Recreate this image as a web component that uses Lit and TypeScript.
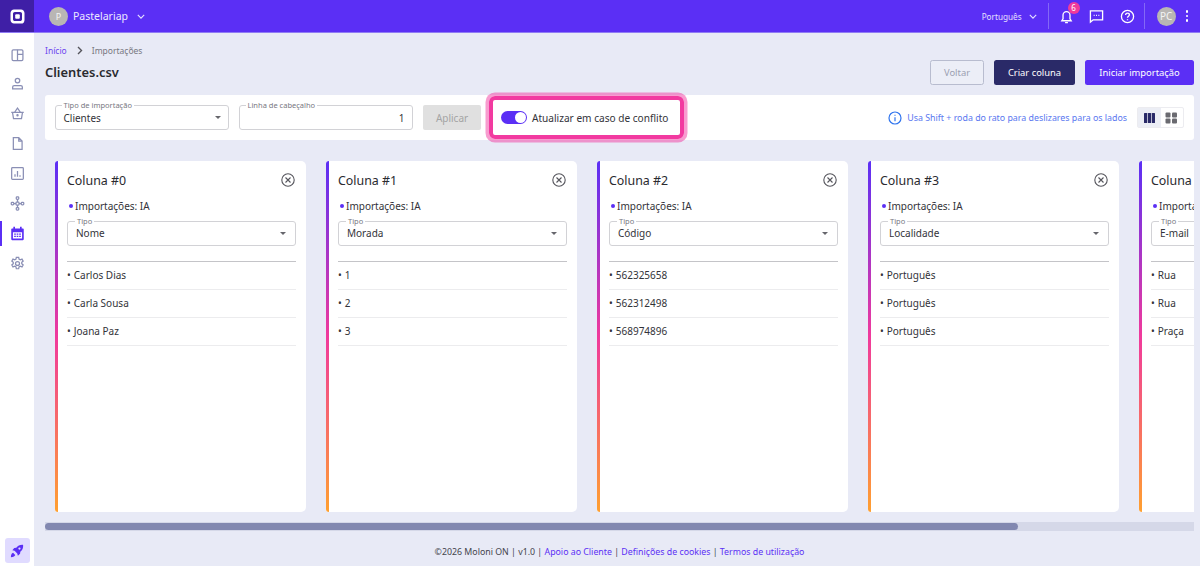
import { LitElement, html, css, svg } from "lit";
import { customElement } from "lit/decorators.js";

const navIcons = [
  svg`<g transform="translate(0 2)"><rect x="2.500" y="2.500" width="13" height="13" rx="1.500"/><path d="M9 2.500v13M9 8h6.500"/></g>`,
  svg`<circle cx="9" cy="5.400" r="2.700"/><path d="M3.200 15.500v-2.300c0-1 .8-1.800 1.800-1.800h8c1 0 1.800.8 1.800 1.800v2.300z"/>`,
  svg`<path d="M1.500 7.500h15M3 7.500l1.200 7.500h9.600L15 7.500M5.500 7.500 9 2.500l3.500 5"/><circle cx="9" cy="11" r=".7"/>`,
  svg`<path d="M4 2h6.500L14.500 6v10H4zM10.500 2v4h4"/>`,
  svg`<rect x="2" y="2" width="14" height="14" rx="1"/><path d="M6 13V10M9 13V6M12 13V11"/>`,
  svg`<rect x="7.500" y="1" width="3" height="3" rx="1"/><rect x="7.200" y="7.200" width="3.600" height="3.600" rx="1"/><rect x="7.500" y="14" width="3" height="3" rx="1"/><rect x="1.500" y="7.500" width="3" height="3" rx="1"/><rect x="13.500" y="7.500" width="3" height="3" rx="1"/><path d="M9 4v3.200M9 10.800V14M4.500 9h2.700M10.800 9h2.700"/>`,
];
const calendar = svg`<path fill="currentColor" stroke="none" d="M4 1h2v2h6V1h2v2h1.500c.6 0 1 .4 1 1v12c0 .6-.4 1-1 1h-13c-.6 0-1-.4-1-1V4c0-.6.4-1 1-1H4zM3.500 7.500V15h11V7.500z"/><path fill="currentColor" stroke="none" d="M5 9h2v1.500H5zM8 9h2v1.500H8zM11 9h2v1.500h-2zM5 11.800h2v1.500H5zM8 11.800h2v1.500H8zM11 11.800h2v1.500h-2z"/>`;
const gear = svg`<circle cx="9" cy="9" r="2.400"/><path d="M7.600 1.500h2.800l.4 2.200 1.500.8 2.100-.8 1.400 2.400-1.700 1.500v1.600l1.700 1.500-1.400 2.400-2.100-.8-1.500.8-.4 2.200H7.600l-.4-2.200-1.500-.8-2.100.8-1.400-2.400 1.700-1.500V7.600L2.200 6.100l1.400-2.400 2.100.8 1.500-.8z"/>`;
const chevron = html`<svg class="chev" viewBox="0 0 10 6"><path d="M1 1l4 4 4-4"/></svg>`;
const caret = html`<span class="caret"></span>`;

const columns = [
  { n: 0, type: "Nome", rows: ["Carlos Dias", "Carla Sousa", "Joana Paz"] },
  { n: 1, type: "Morada", rows: ["1", "2", "3"] },
  { n: 2, type: "Código", rows: ["562325658", "562312498", "568974896"] },
  { n: 3, type: "Localidade", rows: ["Português", "Português", "Português"] },
  { n: 4, type: "E-mail", rows: ["Rua", "Rua", "Praça"] },
];

@customElement("app-root")
export class AppRoot extends LitElement {
  static styles = css`
    :host {
      display: grid;
      grid-template-columns: 34px 1fr;
      grid-template-rows: 33px 1fr;
      width: 1200px;
      height: 566px;
      overflow: hidden;
      font-family: "Noto Sans", sans-serif;
      color: #28282f;
      background: #e8eaf6;
    }
    .logo {
      background: #3f1fa6;
      display: flex;
      align-items: center;
      justify-content: center;
      border-bottom: 1px solid #8f7bf5;
    }
    .topbar {
      background: #5b2ff5;
      border-bottom: 1px solid #8f7bf5;
      display: flex;
      align-items: center;
      color: #fff;
      padding: 0 9px 0 15px;
    }
    .avatar {
      border-radius: 50%;
      background: #b9b6b4;
      color: #f3f3f3;
      display: flex;
      align-items: center;
      justify-content: center;
      flex: none;
    }
    .a1 { width: 19px; height: 19px; font-size: 9px; }
    .a2 { width: 19px; height: 19px; font-size: 10px; margin-left: 12px; }
    .company { font-size: 10.500px; margin-left: 5px; color: #ece8ff; }
    .chev { width: 8px; height: 5px; fill: none; stroke: #e6e0ff; stroke-width: 1.400; flex: none; }
    .company + .chev { margin-left: 9px; }
    .spacer { flex: 1; }
    .lang { font-size: 8.200px; margin-right: 7px; color: #e6e0ff; }
    .vsep { width: 1px; height: 26px; background: #8468f6; flex: none; }
    .vs1 { margin-left: 11px; }
    .ticon { width: 15px; height: 15px; fill: none; stroke: #fff; stroke-width: 1.400; display: block; flex: none; }
    .bell { position: relative; margin-left: 10px; }
    .badge {
      position: absolute;
      top: -7px;
      left: 9px;
      width: 12px;
      height: 12px;
      border-radius: 50%;
      background: #f03a9c;
      font-size: 8px;
      line-height: 12px;
      text-align: center;
      color: #fff;
    }
    .chat { margin-left: 15px; }
    .help { margin-left: 16px; margin-right: 9px; }
    .kebab { display: flex; flex-direction: column; gap: 2px; margin-left: 10px; margin-right: 3px; }
    .kebab i { width: 2.400px; height: 2.400px; background: #fff; border-radius: 50%; display: block; }

    .side {
      background: #fff;
      display: flex;
      flex-direction: column;
      align-items: center;
      padding-top: 8px;
    }
    .nav {
      width: 100%;
      height: 25px;
      margin-bottom: 5px;
      display: flex;
      align-items: center;
      justify-content: center;
      color: #8a8fb5;
      flex: none;
    }
    .nav svg { width: 15px; height: 15px; fill: none; stroke: currentColor; stroke-width: 1.500; overflow: visible; }
    .nav.on { color: #5b2ff5; box-shadow: inset 2px 0 0 #5b2ff5; }
    .rocket {
      margin-top: auto;
      margin-bottom: 3px;
      margin-left: 0.500px;
      width: 25px;
      height: 25px;
      border-radius: 3px;
      background: #e0dbff;
      display: flex;
      align-items: center;
      justify-content: center;
    }
    .rocket svg { width: 14px; height: 14px; fill: #5b2ff5; }

    .main {
      min-width: 0;
      display: flex;
      flex-direction: column;
      padding: 0 6px 0 11px;
    }
    .crumbs {
      height: 13px;
      margin-top: 11px;
      display: flex;
      align-items: center;
      font-size: 8.500px;
      color: #77777f;
    }
    .crumbs a { color: #6d46f0; }
    .crumbs svg { width: 6px; height: 9px; margin: 0 9px 0 10px; fill: none; stroke: #55555c; stroke-width: 1.400; }
    .head {
      display: flex;
      align-items: center;
      height: 25px;
      margin-top: 3px;
      gap: 10px;
    }
    .head h1 {
      margin: 0 auto 0 0;
      position: relative;
      top: -1px;
      font-size: 12.900px;
      font-weight: 600;
      color: #2a2a30;
    }
    .btn {
      height: 25px;
      box-sizing: border-box;
      border-radius: 2.500px;
      font-size: 9.400px;
      display: flex;
      align-items: center;
      justify-content: center;
      color: #fff;
    }
    .b1 { width: 54px; border: 1px solid #b8bccf; color: #9b9fb2; background: #eceef7; }
    .b2 { width: 81px; background: #2a2a68; }
    .b3 { width: 109px; background: #5b2ff5; }
    .toolbar {
      margin-top: 10px;
      height: 45px;
      background: #fff;
      border-radius: 3px;
      display: flex;
      align-items: center;
      padding: 0 10px;
      flex: none;
    }
    .field {
      position: relative;
      height: 25px;
      box-sizing: border-box;
      border: 1px solid #d2d2d6;
      border-radius: 3px;
      display: flex;
      align-items: center;
      font-size: 10px;
      padding: 0 7.500px;
      color: #333339;
      background: #fff;
    }
    .field label {
      position: absolute;
      top: -5px;
      left: 5.500px;
      padding: 0 2px;
      background: #fff;
      font-size: 7.500px;
      line-height: 9px;
      color: #77777f;
    }
    .f1 { width: 174px; }
    .f2 { width: 174px; margin-left: 10px; justify-content: flex-end; }
    .caret {
      margin-left: auto;
      border: 3.200px solid transparent;
      border-top: 3.500px solid #66666c;
      border-bottom: 0;
    }
    .apply {
      width: 58px;
      height: 25px;
      margin-left: 10px;
      background: #e0e0e0;
      color: #a4a4a4;
      border-radius: 2px;
      font-size: 10px;
      display: flex;
      align-items: center;
      justify-content: center;
    }
    .conflict {
      margin-left: 8px;
      width: 195px;
      height: 43px;
      box-sizing: border-box;
      border: 4px solid #f23aa0;
      border-radius: 6px;
      box-shadow: 0 0 0 3.500px rgba(242, 58, 160, 0.5);
      display: flex;
      align-items: center;
      padding-left: 8px;
      font-size: 10.100px;
      color: #333339;
      flex: none;
    }
    .switch {
      width: 26px;
      height: 13px;
      border-radius: 7px;
      background: #5b2ff5;
      position: relative;
      margin-right: 5px;
      flex: none;
    }
    .switch::after {
      content: "";
      position: absolute;
      right: 1px;
      top: 1px;
      width: 11px;
      height: 11px;
      border-radius: 50%;
      background: #fff;
    }
    .info { margin-left: auto; display: flex; align-items: center; color: #5a78f0; font-size: 8.830px; }
    .info svg { width: 14px; height: 14px; fill: none; stroke: #2f74ee; stroke-width: 1.200; margin-right: 5px; }
    .views {
      margin-left: 10px;
      width: 47px;
      height: 21px;
      border: 1px solid #ececf0;
      box-sizing: border-box;
      border-radius: 2px;
      display: flex;
    }
    .views div { flex: 1; display: flex; align-items: center; justify-content: center; }
    .views div:first-child { background: #eceef5; }
    .views svg { width: 13px; height: 12px; }

    .board {
      margin-top: 21px;
      height: 351px;
      padding-left: 10px;
      display: flex;
      gap: 20px;
      overflow: hidden;
      flex: none;
    }
    .card {
      width: 251px;
      flex: none;
      box-sizing: border-box;
      background: #fff;
      border-radius: 3px 5px 5px 3px;
      position: relative;
      padding: 0 10.500px 0 12px;
      display: flex;
      flex-direction: column;
    }
    .card::before {
      content: "";
      position: absolute;
      left: 0;
      top: 0;
      bottom: 0;
      width: 3px;
      border-radius: 3px 0 0 3px;
      background: linear-gradient(#5b2ff5 0%, #f03a9c 50%, #ffa030 100%);
    }
    .ctitle {
      height: 20px;
      margin-top: 9px;
      display: flex;
      align-items: center;
      justify-content: space-between;
      font-size: 12.400px;
      color: #2a2a30;
    }
    .ctitle svg { width: 14px; height: 14px; margin-right: 0.500px; fill: none; stroke: #55555c; stroke-width: 1.100; flex: none; }
    .ia {
      margin-top: 9px;
      height: 14px;
      display: flex;
      align-items: center;
      font-size: 10px;
      color: #333339;
      padding-left: 2px;
    }
    .ia::before {
      content: "";
      width: 4px;
      height: 4px;
      border-radius: 50%;
      background: #5b2ff5;
      margin-right: 2px;
    }
    .card .field { margin-top: 8px; height: 25px; flex: none; padding: 0 9px 2px 8px; }
    .card .field .caret { margin-top: 2px; }
    .card .field label { left: 7px; }
    .list { margin-top: 15px; border-top: 1px solid #c4c4c8; }
    .row {
      height: 28px;
      box-sizing: border-box;
      border-bottom: 1px solid #ececee;
      display: flex;
      align-items: center;
      gap: 3px;
      padding-bottom: 2px;
      font-size: 10px;
      color: #333339;
    }

    .track {
      margin-top: 10px;
      height: 9px;
      background: #d5d8e8;
      flex: none;
    }
    .thumb { width: 973px; height: 7px; position: relative; top: 1px; background: #8288b0; border-radius: 4px; }
    .footer {
      margin-top: 15px;
      text-align: center;
      font-size: 8.800px;
      line-height: 12px;
      color: #44444c;
    }
    .footer a { color: #5b2ff5; }
  `;

  render() {
    return html`
      <div class="logo">
        <svg width="15" height="15" viewBox="0 0 15 15">
          <path fill="#fff" fill-rule="evenodd" d="M4 .5h7c1.900 0 3.500 1.600 3.500 3.500v7c0 1.500-.8 3-2 3.500H4C2.100 14.500.5 12.900.5 11V4C.5 2.100 2.100.5 4 .5zM4.800 3C3.800 3 3 3.800 3 4.800v5.400c0 1 .8 1.800 1.800 1.800h5.400c1 0 1.800-.8 1.800-1.800V4.800c0-1-.8-1.800-1.800-1.800z"/>
          <rect x="5.200" y="5.200" width="4.600" height="4.600" rx="1" fill="#fff"/>
        </svg>
      </div>
      <div class="topbar">
        <div class="avatar a1">P</div>
        <span class="company">Pastelariap</span>
        ${chevron}
        <span class="spacer"></span>
        <span class="lang">Português</span>
        ${chevron}
        <span class="vsep vs1"></span>
        <div class="bell">
          <svg class="ticon" viewBox="0 0 16 16"><path d="M3 12.500h10l-1.300-2V6.500a3.700 3.700 0 0 0-7.400 0v4zM6.500 14.500h3"/></svg>
          <span class="badge">6</span>
        </div>
        <svg class="ticon chat" viewBox="0 0 16 16"><path d="M1.500 2h13v9.500H4.500l-3 2.500z"/><path d="M5 6.800h1M7.500 6.800h1M10 6.800h1"/></svg>
        <svg class="ticon help" viewBox="0 0 16 16"><circle cx="8" cy="8" r="6.500"/><path d="M6 6.300c0-1.200 1-2 2-2s2 .8 2 1.900c0 1.500-2 1.600-2 3.200M8 11v1"/></svg>
        <span class="vsep"></span>
        <div class="avatar a2">PC</div>
        <div class="kebab"><i></i><i></i><i></i></div>
      </div>
      <aside class="side">
        ${navIcons.map((i) => html`<div class="nav"><svg viewBox="0 0 18 18">${i}</svg></div>`)}
        <div class="nav on"><svg viewBox="0 0 18 18">${calendar}</svg></div>
        <div class="nav"><svg viewBox="0 0 18 18">${gear}</svg></div>
        <div class="rocket">
          <svg viewBox="0 0 16 16"><path d="M15 1c-3.400-.3-6 .9-7.800 3.200L4.800 4.500 2.700 7l2.500.7L8.300 10.800l.7 2.500 2.500-2.100.3-2.400C14.100 7 15.300 4.400 15 1z"/><path d="M3.500 10c-1.400.3-2.400 2-2.500 5 3-.1 4.700-1.100 5-2.500z"/><circle cx="10.800" cy="5.200" r="1.300" fill="#e0dbff"/></svg>
        </div>
      </aside>
      <main class="main">
        <div class="crumbs">
          <a>Início</a>
          <svg viewBox="0 0 6 9"><path d="M1 1l3.500 3.500L1 8"/></svg>
          <span>Importações</span>
        </div>
        <div class="head">
          <h1>Clientes.csv</h1>
          <div class="btn b1">Voltar</div>
          <div class="btn b2">Criar coluna</div>
          <div class="btn b3">Iniciar importação</div>
        </div>
        <div class="toolbar">
          <div class="field f1"><label>Tipo de importação</label>Clientes${caret}</div>
          <div class="field f2"><label>Linha de cabeçalho</label>1</div>
          <div class="apply">Aplicar</div>
          <div class="conflict"><span class="switch"></span>Atualizar em caso de conflito</div>
          <div class="info">
            <svg viewBox="0 0 14 14"><circle cx="7" cy="7" r="6"/><path d="M7 6.200v4M7 3.800v1"/></svg>
            Usa Shift + roda do rato para deslizares para os lados
          </div>
          <div class="views">
            <div><svg viewBox="0 0 13 12" fill="#2a2a68"><rect x="1" y="1" width="3.200" height="10" rx=".5"/><rect x="4.900" y="1" width="3.200" height="10" rx=".5"/><rect x="8.800" y="1" width="3.200" height="10" rx=".5"/></svg></div>
            <div><svg viewBox="0 0 13 12" fill="#6a6a70"><rect x="0.500" y="0.500" width="5" height="5" rx="1"/><rect x="7" y="0.500" width="5" height="5" rx="1"/><rect x="0.500" y="6.500" width="5" height="5" rx="1"/><rect x="7" y="6.500" width="5" height="5" rx="1"/></svg></div>
          </div>
        </div>
        <div class="board">
          ${columns.map(
            (c) => html`
              <section class="card">
                <div class="ctitle">
                  <span>Coluna #${c.n}</span>
                  <svg viewBox="0 0 14 14"><circle cx="7" cy="7" r="6.200"/><path d="M4.500 4.500l5 5M9.500 4.500l-5 5"/></svg>
                </div>
                <div class="ia">Importações: IA</div>
                <div class="field"><label>Tipo</label>${c.type}${caret}</div>
                <div class="list">
                  ${c.rows.map((r) => html`<div class="row"><span>•</span><span>${r}</span></div>`)}
                </div>
              </section>
            `
          )}
        </div>
        <div class="track"><div class="thumb"></div></div>
        <footer class="footer">
          ©2026 Moloni ON | v1.0 | <a>Apoio ao Cliente</a> | <a>Definições de cookies</a> | <a>Termos de utilização</a>
        </footer>
      </main>
    `;
  }
}
